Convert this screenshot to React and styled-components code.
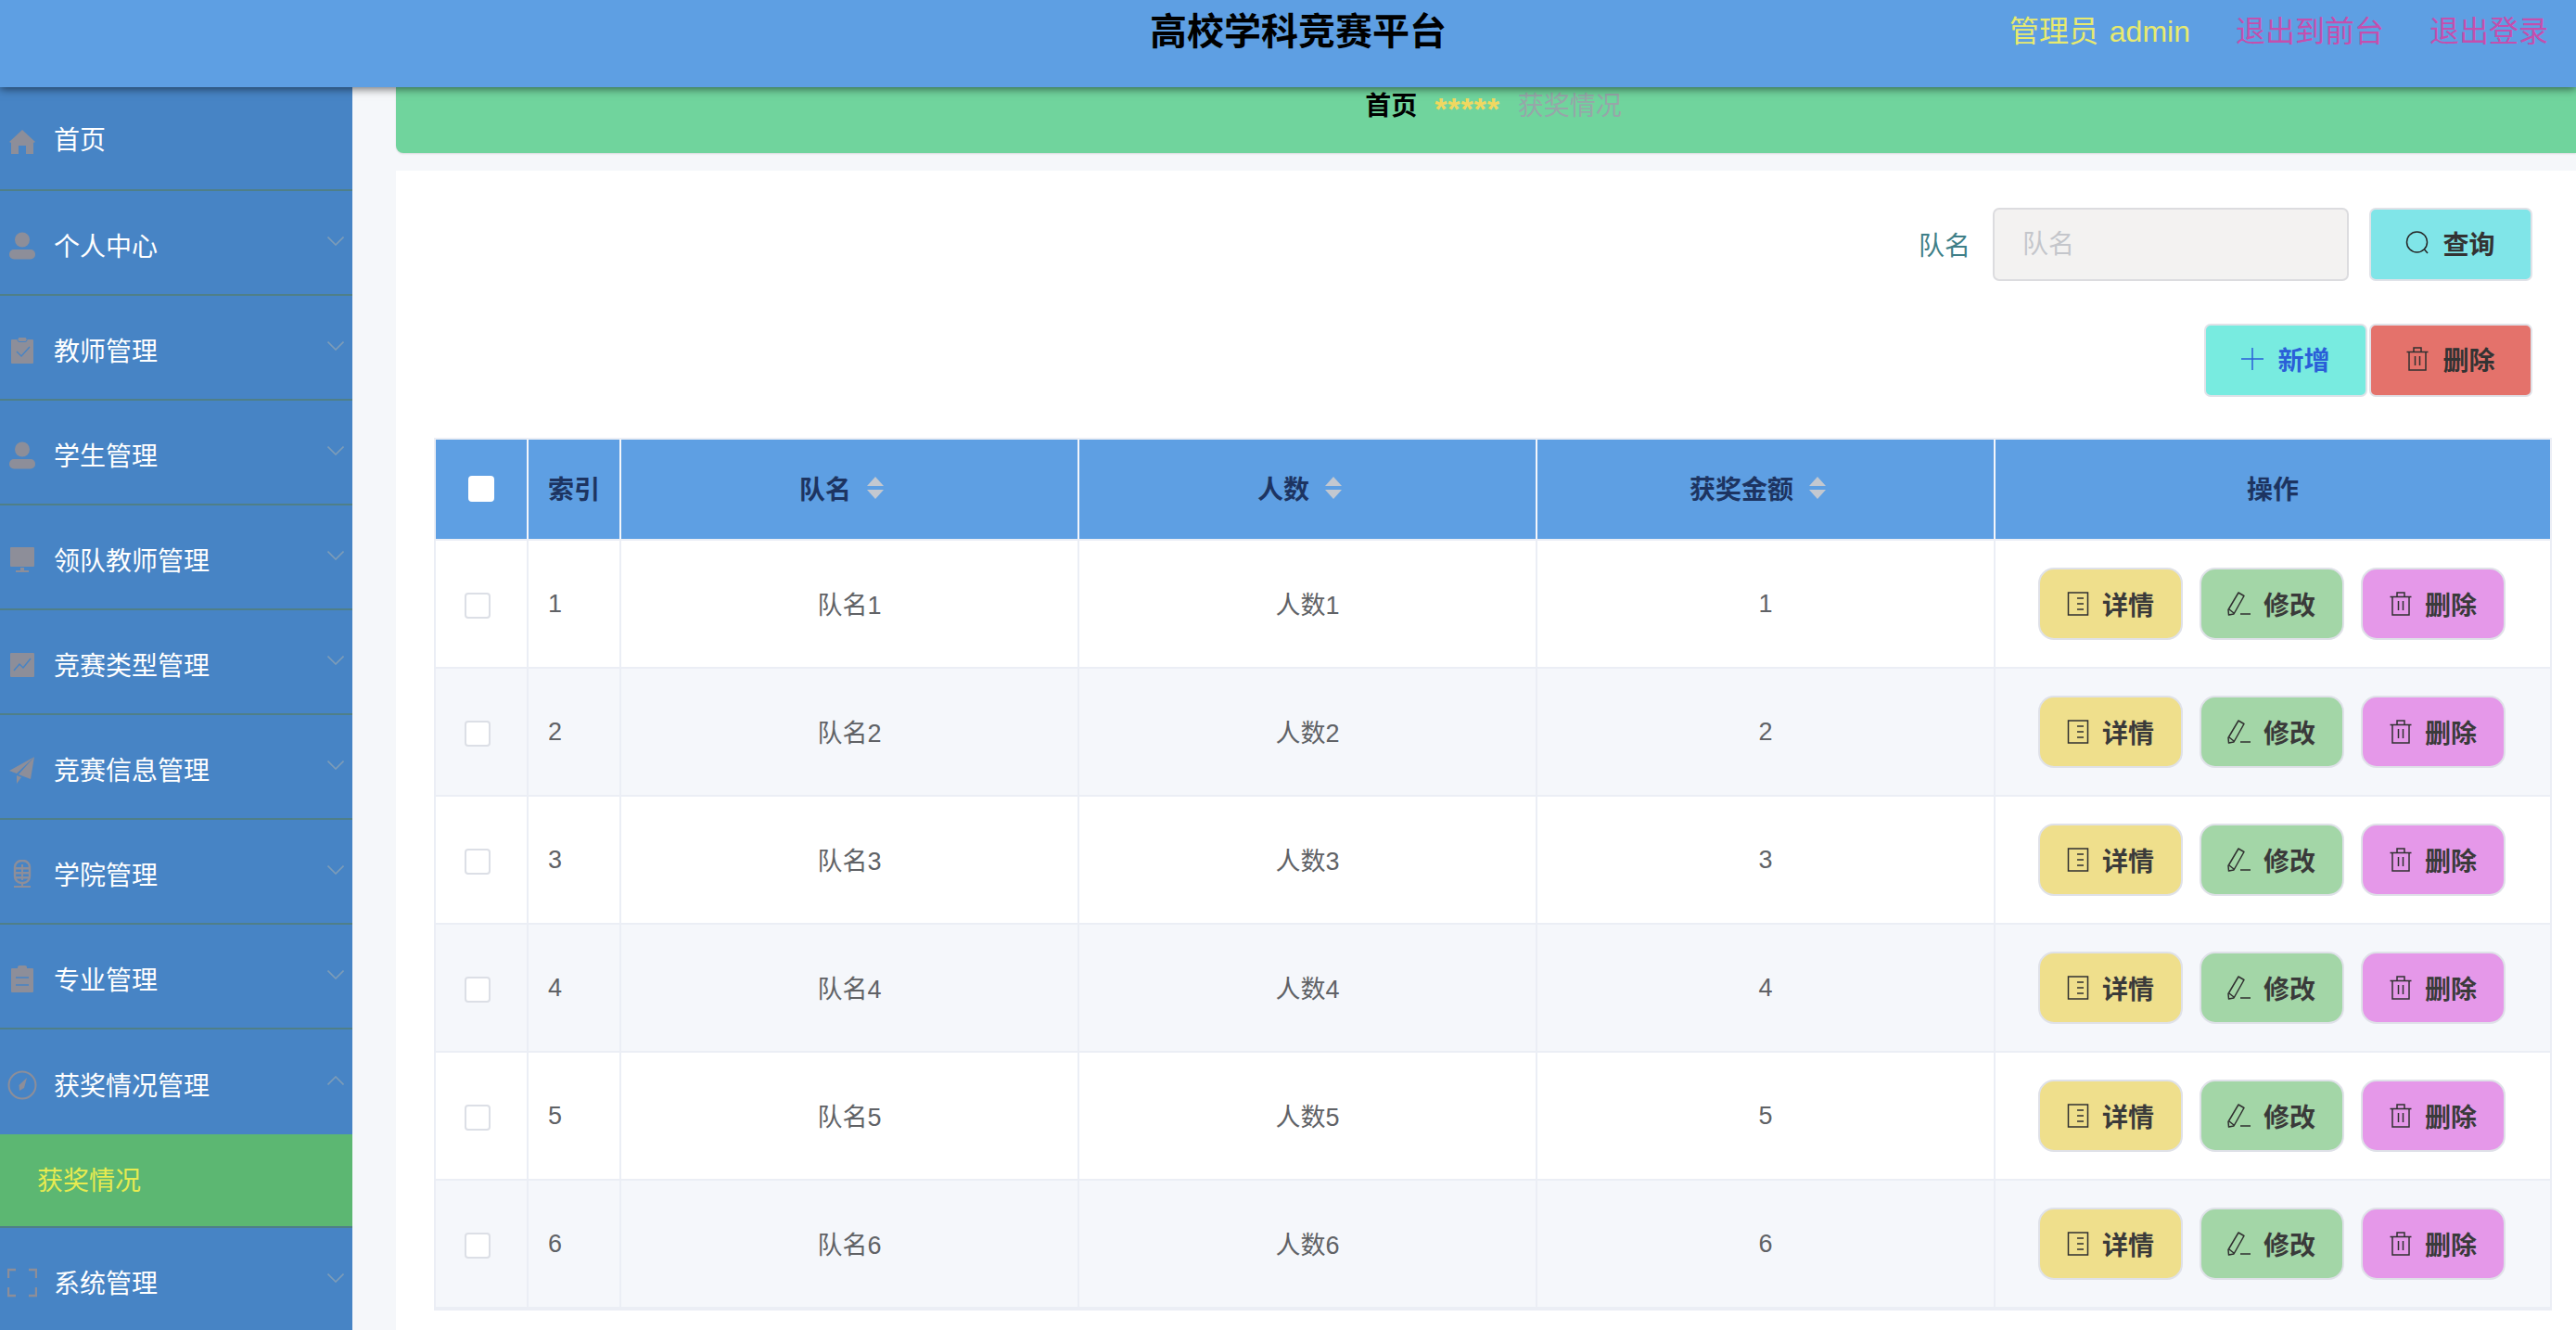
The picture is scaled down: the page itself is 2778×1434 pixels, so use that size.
import React from "react";
import styled, { createGlobalStyle } from "styled-components";

const GlobalStyle = createGlobalStyle`
  html, body { margin: 0; padding: 0; height: 100%; }
  body { font-family: "Liberation Sans", "Noto Sans CJK SC", sans-serif; background: #f5f7fa; overflow: hidden; }
  * { box-sizing: border-box; }
`;

const Page = styled.div`
  width: 2778px;
  height: 1434px;
  display: flex;
  flex-direction: column;
  overflow: hidden;
`;

const Header = styled.header`
  position: relative;
  z-index: 2;
  flex: 0 0 94px;
  display: grid;
  grid-template-columns: 1fr auto 1fr;
  background: #5e9fe3;
  box-shadow: 0 2px 9px rgba(0, 0, 0, 0.55);
`;

const Title = styled.h1`
  grid-column: 2;
  margin: 0;
  padding-left: 22px;
  font-size: 40px;
  line-height: 68px;
  font-weight: 700;
  color: #000;
`;

const HeaderLinks = styled.div`
  grid-column: 3;
  display: flex;
  justify-content: flex-end;
  gap: 49px;
  padding-right: 30px;
  font-size: 32px;
  line-height: 68px;
`;

const HeaderLink = styled.span`
  color: ${(p) => p.$color};
  white-space: nowrap;
  word-spacing: 3px;
`;

const Body = styled.div`
  flex: 1;
  display: flex;
  min-height: 0;
`;

const Sidebar = styled.nav`
  flex: 0 0 380px;
  background: #4784c5;
`;

const MenuItem = styled.div`
  height: ${(p) => (p.$first ? 112 : 113)}px;
  padding: ${(p) => (p.$first ? 0 : 4)}px 9px 0 8px;
  display: flex;
  align-items: center;
  gap: 18px;
  color: #fff;
  font-size: 28px;
  border-bottom: ${(p) => (p.$open ? "0" : "2px solid #4f7f88")};
`;

const MenuLabel = styled.span`
  flex: 1;
  white-space: nowrap;
`;

const Chevron = styled.svg`
  width: 18px;
  height: 10px;
  margin-bottom: 8px;
  fill: none;
  stroke: #7d9cb8;
  stroke-width: 1.6;
`;

const MenuIcon = styled.svg`
  flex: 0 0 32px;
  width: 32px;
  height: 32px;
  margin-top: 2px;
  fill: #8d8e99;
`;

const SubItem = styled.div`
  height: 101px;
  padding: 0 0 3px 40px;
  display: flex;
  align-items: center;
  background: #5cb772;
  color: #e7eb50;
  font-size: 28px;
  border-bottom: 2px solid #4f7f88;
`;

const Main = styled.main`
  flex: 1;
  min-width: 0;
  padding-left: 47px;
  display: flex;
  flex-direction: column;
  gap: 19px;
  background: #f5f7fa;
`;

const Banner = styled.div`
  flex: 0 0 71px;
  display: flex;
  justify-content: center;
  align-items: flex-start;
  gap: 19px;
  padding: 2px 0 0 16px;
  background: #70d49d;
  border-radius: 0 0 0 8px;
  box-shadow: 0 1px 2px rgba(0, 0, 0, 0.12);
  font-size: 28px;
  line-height: 38px;
`;

const Crumb = styled.span`
  color: ${(p) => (p.$current ? "#97a6a9" : "#000")};
  font-weight: ${(p) => (p.$current ? 400 : 700)};
`;

const CrumbStars = styled.span`
  color: #f0d860;
  font-weight: 700;
  font-size: 34px;
  letter-spacing: 0.9px;
  line-height: 42px;
`;

const Panel = styled.section`
  flex: 1;
  background: #fff;
  padding: 40px 26px 0 41px;
  display: flex;
  flex-direction: column;
`;

const SearchRow = styled.div`
  display: flex;
  justify-content: flex-end;
  align-items: center;
  padding-right: 21px;
  height: 79px;
`;

const FieldLabel = styled.label`
  font-size: 28px;
  color: #3f7f88;
  margin-right: 24px;
  padding-bottom: 2px;
`;

const SearchInput = styled.input`
  width: 384px;
  height: 79px;
  padding: 0 30px;
  border: 2px solid #dcdcdf;
  border-radius: 7px;
  background: #f3f2f1;
  font: 28px "Liberation Sans", "Noto Sans CJK SC", sans-serif;
  margin-right: 22px;
  &::placeholder { color: #c4c6cb; opacity: 1; }
`;

const ToolButton = styled.button`
  width: 176px;
  height: 79px;
  padding: 0 2px 3px 0;
  display: inline-flex;
  align-items: center;
  justify-content: center;
  gap: 13px;
  border: 2px solid #e0e2e8;
  border-radius: 7px;
  background: ${(p) => p.$bg};
  color: ${(p) => p.$fg || "#333"};
  font: 700 28px "Liberation Sans", "Noto Sans CJK SC", sans-serif;
`;

const ActionsRow = styled.div`
  display: flex;
  justify-content: flex-end;
  gap: 2px;
  padding-right: 21px;
  margin-top: 46px;
`;

const Table = styled.div`
  margin-top: 44px;
  border: 2px solid #ebeef5;
`;

const columns = "100px 100px 494px 494px 494px 1fr";

const HeadRow = styled.div`
  display: grid;
  grid-template-columns: ${columns};
  height: 109px;
  background: #5e9fe3;
  border-bottom: 2px solid #ebeef5;
`;

const HeadCell = styled.div`
  display: flex;
  align-items: center;
  justify-content: ${(p) => (p.$left ? "flex-start" : "center")};
  padding-left: ${(p) => (p.$left ? 21 : 0)}px;
  padding-right: ${(p) => p.$pr || 0}px;
  padding-bottom: 4px;
  border-right: ${(p) => (p.$last ? "0" : "2px solid #f3f6fb")};
  color: #1d3461;
  font-size: 28px;
  font-weight: 700;
`;

const SortCaret = styled.svg`
  width: 20px;
  height: 24px;
  margin-left: 16px;
  fill: #c3c8d0;
`;

const Row = styled.div`
  display: grid;
  grid-template-columns: ${columns};
  height: 138px;
  background: ${(p) => (p.$even ? "#f5f7fb" : "#fff")};
  border-bottom: 2px solid #ebeef5;
`;

const Cell = styled.div`
  display: flex;
  align-items: center;
  justify-content: ${(p) => (p.$left ? "flex-start" : "center")};
  padding-left: ${(p) => (p.$left ? 21 : 0)}px;
  padding-right: ${(p) => p.$pr || 0}px;
  padding-bottom: ${(p) => p.$pb || 0}px;
  border-right: ${(p) => (p.$last ? "0" : "2px solid #ebeef5")};
  color: #606266;
  font-size: 27px;
  gap: 18px;
`;

const Check = styled.span`
  display: block;
  width: 28px;
  height: 28px;
  margin-top: 3px;
  background: #fff;
  border: 2px solid ${(p) => (p.$head ? "#fff" : "#dcdfe6")};
  border-radius: 4px;
`;

const RowButton = styled.button`
  width: 156px;
  height: 78px;
  padding: 0 2px 1px 0;
  display: inline-flex;
  align-items: center;
  justify-content: center;
  gap: 12px;
  border: 2px solid #dfe1e8;
  border-radius: 17px;
  background: ${(p) => p.$bg};
  color: #3a3a3a;
  font: 700 28px "Liberation Sans", "Noto Sans CJK SC", sans-serif;
`;

const LineIcon = styled.svg`
  width: 28px;
  height: 28px;
  flex: none;
  fill: none;
  stroke: ${(p) => p.$c || "#303030"};
  stroke-width: 1.5;
`;

const BG = "#4784c5";

const icons = {
  home: <path d="M16 6 L30 19 L28 20 L28 32 L20 32 L20 23 L12 23 L12 32 L4 32 L4 20 L2 19 Z" />,
  user: (
    <>
      <circle cx="16" cy="9.5" r="8" />
      <rect x="2" y="20" width="28" height="10.5" rx="5" />
    </>
  ),
  check: (
    <>
      <rect x="4" y="4" width="24" height="26" rx="1" />
      <rect x="11" y="1.5" width="10" height="5" rx="2" stroke={BG} strokeWidth="1" />
      <path d="M10 17 L15 22 L24 12" fill="none" stroke={BG} strokeWidth="1.4" />
    </>
  ),
  monitor: (
    <>
      <rect x="3" y="2" width="26" height="21" rx="1" />
      <path d="M14 24 h4 v3 h5 v2 H9 v-2 h5 Z" />
    </>
  ),
  chart: (
    <>
      <rect x="3" y="3" width="26" height="26" rx="1" />
      <path d="M7 22 L13 15 L17 19 L25 9" fill="none" stroke={BG} strokeWidth="1.5" />
    </>
  ),
  plane: (
    <>
      <path d="M29 2 L2 17 L10 20 Z" />
      <path d="M29 2 L12 21 L25 26 Z" />
      <path d="M10 22 L15 24 L10 31 Z" />
    </>
  ),
  mic: (
    <>
      <rect x="8" y="1" width="16" height="24" rx="7" fill="none" stroke="#8d8e99" strokeWidth="2.4" />
      <path d="M9 8 h14 v2.5 H9 Z M9 13 h14 v2.5 H9 Z M9 18 h14 v2.5 H9 Z M15 5 h2 v17 h-2 Z" />
      <path d="M15 25 h2 v4 h-2 Z M7 28 h18 v2 H7 Z" />
    </>
  ),
  clip: (
    <>
      <rect x="4" y="4" width="24" height="26" rx="1" />
      <rect x="11" y="1" width="10" height="5" rx="2" />
      <path d="M9 14 H23 M9 22 H23" stroke={BG} strokeWidth="1.4" />
    </>
  ),
  compass: (
    <>
      <circle cx="16" cy="16" r="14.5" fill="none" stroke="#8d8e99" strokeWidth="2" />
      <path d="M21 8 L18 19 L13 22 L12.5 16 Z" />
    </>
  ),
  full: (
    <path
      d="M1 11 V2 H9 M23 2 H31 V11 M31 21 V30 H23 M9 30 H1 V21"
      fill="none"
      stroke="#8d8e99"
      strokeWidth="2.4"
    />
  ),
};

const menu = [
  ["home", "首页"],
  ["user", "个人中心", 1],
  ["check", "教师管理", 1],
  ["user", "学生管理", 1],
  ["monitor", "领队教师管理", 1],
  ["chart", "竞赛类型管理", 1],
  ["plane", "竞赛信息管理", 1],
  ["mic", "学院管理", 1],
  ["clip", "专业管理", 1],
];

const ChevronIcon = ({ up }) => (
  <Chevron viewBox="0 0 18 10">
    <path d={up ? "M0.5 9.5 L9 1 L17.5 9.5" : "M0.5 0.5 L9 9 L17.5 0.5"} />
  </Chevron>
);

const SearchGlyph = () => (
  <LineIcon viewBox="0 0 28 28" $c="#262626">
    <circle cx="13.5" cy="13" r="11" />
    <path d="M21.5 21 L25 25" />
  </LineIcon>
);
const PlusGlyph = () => (
  <LineIcon viewBox="0 0 28 28" $c="#2a5fd8">
    <path d="M14 2 V26 M2 14 H26" />
  </LineIcon>
);
const TrashGlyph = () => (
  <LineIcon viewBox="0 0 28 28">
    <path d="M5 6.5 H23 V26 H5 Z M2.5 6.5 H25.5 M10 6 V2 H18 V6 M11.5 11 V21 M16.5 11 V21" />
  </LineIcon>
);
const DocGlyph = () => (
  <LineIcon viewBox="0 0 28 28">
    <path d="M3.5 2 H24.5 V26 H3.5 Z M13 8 H20 M13 14 H20 M13 20 H20" />
  </LineIcon>
);
const EditGlyph = () => (
  <LineIcon viewBox="0 0 28 28">
    <path d="M13 2 L19 5.5 L8 25 L2.5 26 L2 20.5 Z M3 20 L8 24 M15 25 H26" strokeLinejoin="round" />
  </LineIcon>
);

const ActionButton = ({ bg, glyph, children }) => (
  <RowButton $bg={bg}>
    {glyph}
    {children}
  </RowButton>
);

const Sort = () => (
  <SortCaret viewBox="0 0 20 24">
    <path d="M10 0 L19 10 H1 Z M1 14 H19 L10 24 Z" />
  </SortCaret>
);

export default function App() {
  return (
    <Page>
      <GlobalStyle />
      <Header>
        <Title>高校学科竞赛平台</Title>
        <HeaderLinks>
          <HeaderLink $color="#e8ea6e">管理员 admin</HeaderLink>
          <HeaderLink $color="#c44fae">退出到前台</HeaderLink>
          <HeaderLink $color="#c44fae">退出登录</HeaderLink>
        </HeaderLinks>
      </Header>
      <Body>
        <Sidebar>
          {menu.map(([icon, label, more], i) => (
            <MenuItem key={label} $first={i === 0}>
              <MenuIcon viewBox="0 0 32 32">{icons[icon]}</MenuIcon>
              <MenuLabel>{label}</MenuLabel>
              {more && <ChevronIcon />}
            </MenuItem>
          ))}
          <MenuItem $open>
            <MenuIcon viewBox="0 0 32 32">{icons.compass}</MenuIcon>
            <MenuLabel>获奖情况管理</MenuLabel>
            <ChevronIcon up />
          </MenuItem>
          <SubItem>获奖情况</SubItem>
          <MenuItem>
            <MenuIcon viewBox="0 0 32 32">{icons.full}</MenuIcon>
            <MenuLabel>系统管理</MenuLabel>
            <ChevronIcon />
          </MenuItem>
        </Sidebar>
        <Main>
          <Banner>
            <Crumb>首页</Crumb>
            <CrumbStars>*****</CrumbStars>
            <Crumb $current>获奖情况</Crumb>
          </Banner>
          <Panel>
            <SearchRow>
              <FieldLabel>队名</FieldLabel>
              <SearchInput placeholder="队名" />
              <ToolButton $bg="#80e5e8">
                <SearchGlyph />
                查询
              </ToolButton>
            </SearchRow>
            <ActionsRow>
              <ToolButton $bg="#78ebe0" $fg="#2a5fd8">
                <PlusGlyph />
                新增
              </ToolButton>
              <ToolButton $bg="#e4726b">
                <TrashGlyph />
                删除
              </ToolButton>
            </ActionsRow>
            <Table>
              <HeadRow>
                <HeadCell>
                  <Check $head />
                </HeadCell>
                <HeadCell $left>索引</HeadCell>
                <HeadCell $pr={16}>
                  队名
                  <Sort />
                </HeadCell>
                <HeadCell $pr={16}>
                  人数
                  <Sort />
                </HeadCell>
                <HeadCell $pr={16}>
                  获奖金额
                  <Sort />
                </HeadCell>
                <HeadCell $last>操作</HeadCell>
              </HeadRow>
              {[1, 2, 3, 4, 5, 6].map((n) => (
                <Row key={n} $even={n % 2 === 0}>
                  <Cell $pr={8}>
                    <Check />
                  </Cell>
                  <Cell $left>{n}</Cell>
                  <Cell $pb={2}>队名{n}</Cell>
                  <Cell $pb={2}>人数{n}</Cell>
                  <Cell>{n}</Cell>
                  <Cell $last $pr={2}>
                    <ActionButton bg="#efdf8c" glyph={<DocGlyph />}>详情</ActionButton>
                    <ActionButton bg="#a3d6a7" glyph={<EditGlyph />}>修改</ActionButton>
                    <ActionButton bg="#e598e9" glyph={<TrashGlyph />}>删除</ActionButton>
                  </Cell>
                </Row>
              ))}
            </Table>
          </Panel>
        </Main>
      </Body>
    </Page>
  );
}
